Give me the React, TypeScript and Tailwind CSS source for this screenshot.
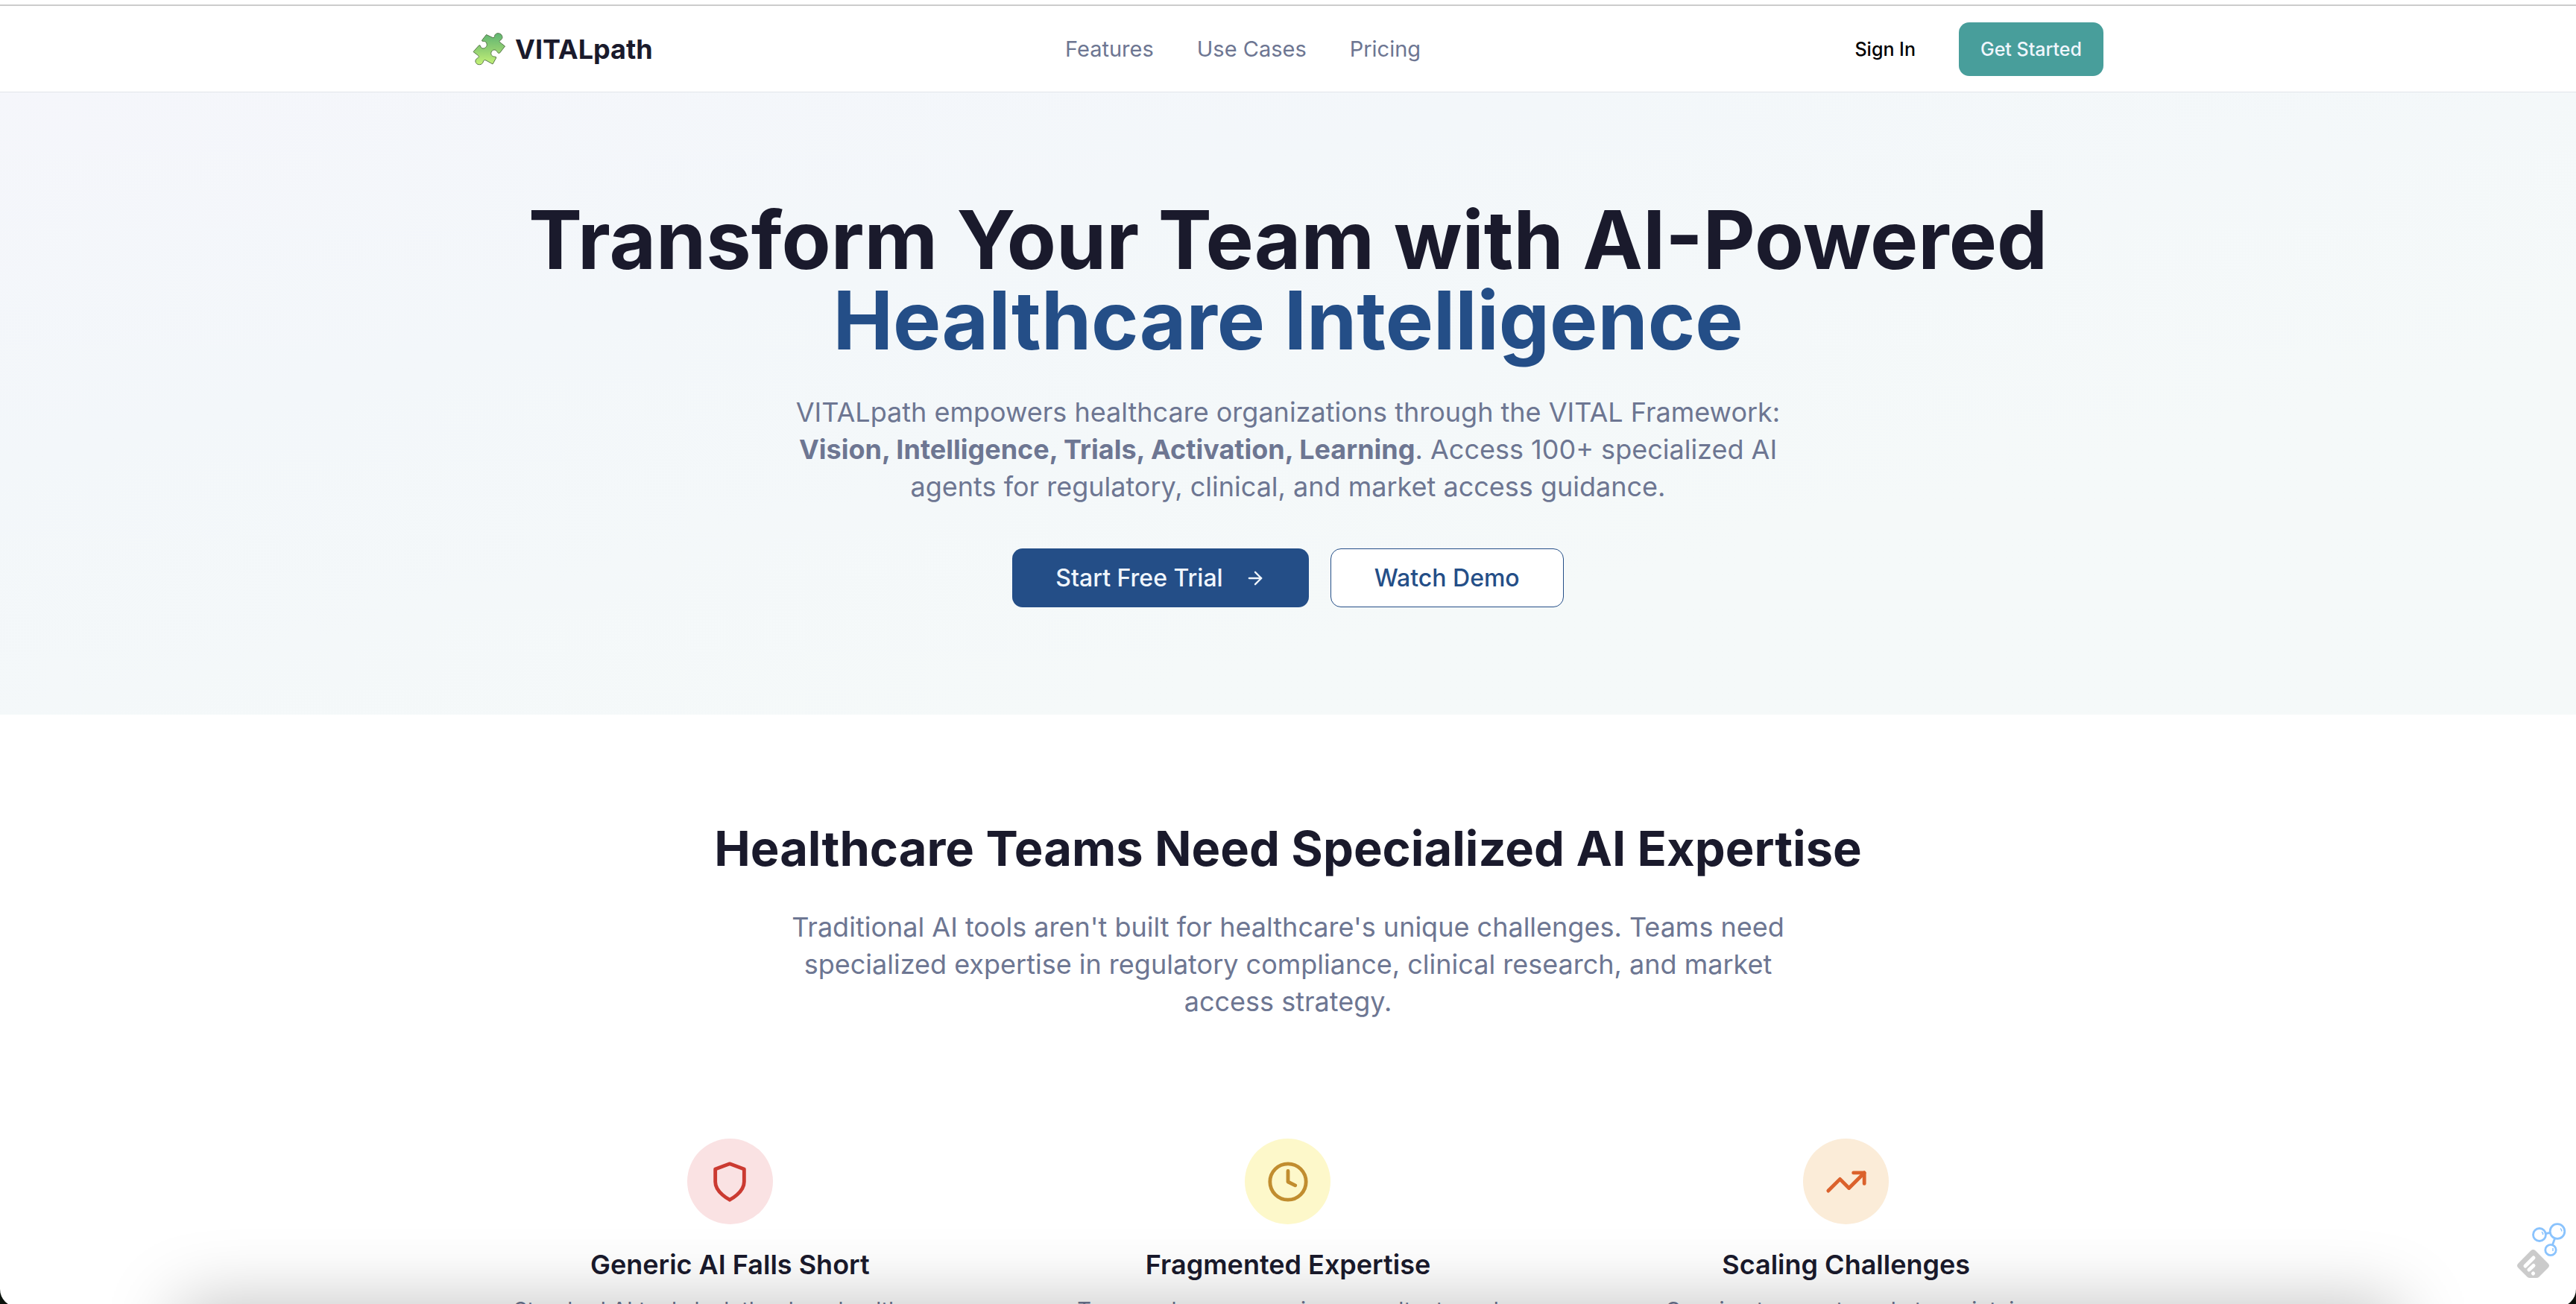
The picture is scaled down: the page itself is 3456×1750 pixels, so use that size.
import React from 'react';
import { ArrowRight, Clock, TrendingUp } from 'lucide-react';

function ShieldIcon({ className }: { className?: string }) {
  return (
    <svg
      viewBox="0 0 24 24"
      className={className}
      fill="none"
      stroke="currentColor"
      strokeWidth="2"
      strokeLinecap="round"
      strokeLinejoin="round"
      aria-hidden="true"
    >
      <path d="M12 22s8-4 8-10V5l-8-3-8 3v7c0 6 8 10 8 10" />
    </svg>
  );
}

const cards = [
  {
    title: 'Generic AI Falls Short',
    text: 'Standard AI tools lack the deep healthcare expertise your teams need for critical decisions.',
    Icon: ShieldIcon,
    circle: 'bg-[#fae2e3]',
    icon: 'text-[#cb3a31]',
  },
  {
    title: 'Fragmented Expertise',
    text: 'Teams rely on expensive consultants and disconnected tools for specialized guidance.',
    Icon: Clock,
    circle: 'bg-[#fdf8ca]',
    icon: 'text-[#c18d2f]',
  },
  {
    title: 'Scaling Challenges',
    text: 'Growing teams struggle to maintain consistency and quality across every project.',
    Icon: TrendingUp,
    circle: 'bg-[#fbecd8]',
    icon: 'text-[#db622c]',
  },
];

function PuzzleIcon() {
  return (
    <svg viewBox="0 0 44 44" className="size-11" aria-hidden="true">
      <defs>
        <linearGradient id="puzzle" x1="0" y1="0" x2="0" y2="1">
          <stop offset="0" stopColor="#5fb573" />
          <stop offset="0.5" stopColor="#8fce72" />
          <stop offset="1" stopColor="#c4f277" />
        </linearGradient>
      </defs>
      <path
        d="M18.500 2.500 L27 6.500 Q29.500 7.500 29.500 4.500 C30 0.500 35 -0.500 38 2 C41 5 40.500 8.500 37 10 Q35 11.500 37 13 L43.500 18 L36.500 27 Q34.500 28.500 33 25.500 C31 21.500 26.500 22.500 25 26 C24 29.500 26.500 32 29.500 32 Q32.500 32 31.500 34 L27 42 L18 37 Q15.500 35.500 14.500 38 C14 42.500 9 44 5.500 41.500 C2.500 38.500 4 35 7.500 33.500 Q9.500 32.500 7.500 30.500 L1 25.500 L8.500 17 Q10 15.500 11 19 C13 22.500 17.500 21 19 17.500 C20 14 17.500 11 14.500 11.500 Q11.500 11.500 13 9.500 Z"
        fill="url(#puzzle)"
        stroke="#58784a"
        strokeWidth="1"
        strokeLinejoin="round"
      />
    </svg>
  );
}

function Header() {
  return (
    <header className="border-t-2 border-b border-t-[#cccccc] border-b-[#e2e5ea] bg-white">
      <div className="mx-auto flex h-[115px] max-w-[2304px] items-center justify-between px-[58px]">
        <a href="#" className="flex items-center gap-[13px] text-[36px] leading-[50px] font-bold text-[#1a1a2c]">
          <PuzzleIcon />
          VITALpath
        </a>
        <nav className="flex items-center gap-[58px] text-[29px] leading-[43px] text-[#6d7692]">
          <a href="#features">Features</a>
          <a href="#use-cases">Use Cases</a>
          <a href="#pricing">Pricing</a>
        </nav>
        <div className="flex items-center gap-[29px] text-[25px] leading-[36px] font-medium">
          <button className="h-[72px] rounded-[14px] px-[29px] text-black">Sign In</button>
          <button className="h-[72px] rounded-[14px] bg-[#489e9b] px-[29px] text-[#f0f6fd]">Get Started</button>
        </div>
      </div>
    </header>
  );
}

function Hero() {
  return (
    <section className="bg-linear-to-br from-[#f5f6fb] via-[#f3f7fa] via-30% to-[#f5f9f9] to-70% px-[58px] py-36 text-center">
      <h1 className="text-[108px] leading-[108px] font-bold text-[#1a1a2c]">
        Transform Your Team with AI-Powered
        <span className="block text-[#244e87]">Healthcare Intelligence</span>
      </h1>
      <p className="mx-auto mt-11 max-w-[1382px] text-[36px] leading-[50px] text-[#6d7692]">
        VITALpath empowers healthcare organizations through the VITAL Framework:{' '}
        <strong className="font-bold">Vision, Intelligence, Trials, Activation, Learning</strong>. Access 100+
        specialized AI agents for regulatory, clinical, and market access guidance.
      </p>
      <div className="mt-[58px] flex justify-center gap-[29px] text-[32px] leading-[50px] font-medium">
        <button className="flex h-[79px] items-center gap-[29px] rounded-[14px] bg-[#244e87] px-[58px] text-[#f0f6fd]">
          Start Free Trial
          <ArrowRight className="size-7" />
        </button>
        <button className="h-[79px] rounded-[14px] border border-[#244e87] bg-white px-[58px] text-[#244e87]">
          Watch Demo
        </button>
      </div>
    </section>
  );
}

function Challenges() {
  return (
    <section className="pt-36">
      <div className="mx-auto max-w-[2304px] px-[58px] text-center">
        <h2 className="text-[65px] leading-[72px] font-bold text-[#1a1a2c]">
          Healthcare Teams Need Specialized AI Expertise
        </h2>
        <p className="mx-auto mt-11 max-w-[1382px] text-[36px] leading-[50px] text-[#6d7692]">
          Traditional AI tools aren't built for healthcare's unique challenges. Teams need specialized expertise in
          regulatory compliance, clinical research, and market access strategy.
        </p>
        <div className="mt-[116px] grid grid-cols-3 gap-[58px]">
          {cards.map(({ title, text, Icon, circle, icon }) => (
            <article key={title} className="flex flex-col items-center p-[43px]">
              <div className={`flex size-[115px] items-center justify-center rounded-full ${circle}`}>
                <Icon className={`size-[58px] ${icon}`} />
              </div>
              <h3 className="mt-[29px] text-[36px] leading-[50px] font-semibold text-[#1a1a2c]">{title}</h3>
              <p className="mt-[14px] text-[29px] leading-[43px] text-[#6d7692]">{text}</p>
            </article>
          ))}
        </div>
      </div>
    </section>
  );
}

function FloatingBadges() {
  return (
    <svg viewBox="0 0 70 80" className="absolute right-3 bottom-8 h-20 w-[70px]" aria-hidden="true">
      <path
        d="M21.500 40.300 Q24.500 37.500 27.500 40.300 L44.500 57.500 Q47.500 60.500 44.500 63.500 L32 76 Q30.700 77 29 77 H20 Q18.300 77 17 76 L4.500 63.500 Q1.500 60.500 4.500 57.500 Z"
        fill="#cbcbcb"
      />
      <g stroke="white" strokeWidth="5" strokeLinecap="round">
        <path d="M14 61 L25 50" />
        <path d="M19 66 L25 60.500" />
        <path d="M24.500 71 L24.600 70.900" />
      </g>
      <g fill="white" stroke="#8ac3fd" strokeWidth="2.800">
        <path d="M33 19 L57 14.500 L48 39.500" fill="none" />
        <circle cx="33" cy="19" r="8.500" />
        <circle cx="57" cy="14.500" r="9.800" />
        <circle cx="48" cy="39.500" r="7.200" />
        <path d="M36 15 q2 1.500 1.500 4 M61 10.500 q2 1.500 1.800 4 M51 37 v4" fill="none" strokeWidth="1.500" />
      </g>
    </svg>
  );
}

export default function App() {
  return (
    <div
      className="relative h-screen overflow-hidden bg-[#0b120c]"
      style={{ fontFamily: 'Inter, "Liberation Sans", sans-serif' }}
    >
      <div className="h-[calc(100%+4px)] overflow-hidden rounded-b-3xl bg-white pt-1.5">
        <Header />
        <main>
          <Hero />
          <Challenges />
        </main>
      </div>
      <div className="pointer-events-none absolute inset-x-60 top-full h-52 shadow-[0_0_96px_rgba(0,0,0,0.25)]" />
      <FloatingBadges />
    </div>
  );
}
